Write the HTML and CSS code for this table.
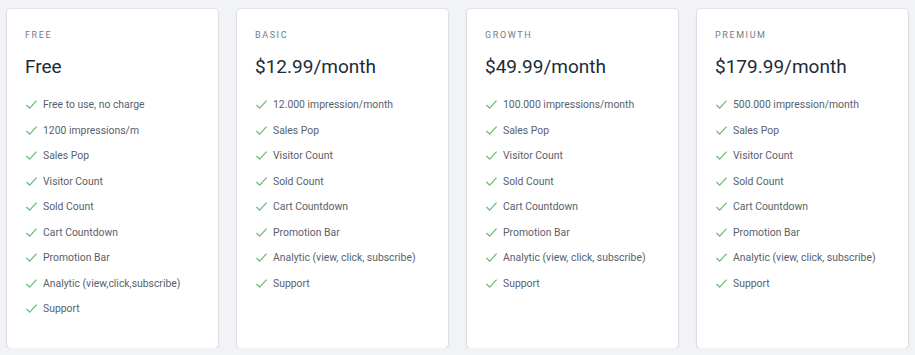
FILE: index.html
```html
<!DOCTYPE html>
<html lang="en">
<head>
<meta charset="utf-8">
<title>Pricing plans</title>
<link rel="stylesheet" href="styles.css">
</head>
<body>
<div class="plans">
  <section class="card">
    <div class="label">FREE</div>
    <h2 class="price">Free</h2>
    <ul class="features">
      <li><svg class="check" viewBox="0 0 14 12"><path d="M1.5 6.5 L5 10 L12.5 1.8"/></svg>Free to use, no charge</li>
      <li><svg class="check" viewBox="0 0 14 12"><path d="M1.5 6.5 L5 10 L12.5 1.8"/></svg>1200 impressions/m</li>
      <li><svg class="check" viewBox="0 0 14 12"><path d="M1.5 6.5 L5 10 L12.5 1.8"/></svg>Sales Pop</li>
      <li><svg class="check" viewBox="0 0 14 12"><path d="M1.5 6.5 L5 10 L12.5 1.8"/></svg>Visitor Count</li>
      <li><svg class="check" viewBox="0 0 14 12"><path d="M1.5 6.5 L5 10 L12.5 1.8"/></svg>Sold Count</li>
      <li><svg class="check" viewBox="0 0 14 12"><path d="M1.5 6.5 L5 10 L12.5 1.8"/></svg>Cart Countdown</li>
      <li><svg class="check" viewBox="0 0 14 12"><path d="M1.5 6.5 L5 10 L12.5 1.8"/></svg>Promotion Bar</li>
      <li><svg class="check" viewBox="0 0 14 12"><path d="M1.5 6.5 L5 10 L12.5 1.8"/></svg>Analytic (view,click,subscribe)</li>
      <li><svg class="check" viewBox="0 0 14 12"><path d="M1.5 6.5 L5 10 L12.5 1.8"/></svg>Support</li>
    </ul>
  </section>
  <section class="card">
    <div class="label">BASIC</div>
    <h2 class="price">$12.99/month</h2>
    <ul class="features">
      <li><svg class="check" viewBox="0 0 14 12"><path d="M1.5 6.5 L5 10 L12.5 1.8"/></svg>12.000 impression/month</li>
      <li><svg class="check" viewBox="0 0 14 12"><path d="M1.5 6.5 L5 10 L12.5 1.8"/></svg>Sales Pop</li>
      <li><svg class="check" viewBox="0 0 14 12"><path d="M1.5 6.5 L5 10 L12.5 1.8"/></svg>Visitor Count</li>
      <li><svg class="check" viewBox="0 0 14 12"><path d="M1.5 6.5 L5 10 L12.5 1.8"/></svg>Sold Count</li>
      <li><svg class="check" viewBox="0 0 14 12"><path d="M1.5 6.5 L5 10 L12.5 1.8"/></svg>Cart Countdown</li>
      <li><svg class="check" viewBox="0 0 14 12"><path d="M1.5 6.5 L5 10 L12.5 1.8"/></svg>Promotion Bar</li>
      <li><svg class="check" viewBox="0 0 14 12"><path d="M1.5 6.5 L5 10 L12.5 1.8"/></svg>Analytic (view, click, subscribe)</li>
      <li><svg class="check" viewBox="0 0 14 12"><path d="M1.5 6.5 L5 10 L12.5 1.8"/></svg>Support</li>
    </ul>
  </section>
  <section class="card">
    <div class="label">GROWTH</div>
    <h2 class="price">$49.99/month</h2>
    <ul class="features">
      <li><svg class="check" viewBox="0 0 14 12"><path d="M1.5 6.5 L5 10 L12.5 1.8"/></svg>100.000 impressions/month</li>
      <li><svg class="check" viewBox="0 0 14 12"><path d="M1.5 6.5 L5 10 L12.5 1.8"/></svg>Sales Pop</li>
      <li><svg class="check" viewBox="0 0 14 12"><path d="M1.5 6.5 L5 10 L12.5 1.8"/></svg>Visitor Count</li>
      <li><svg class="check" viewBox="0 0 14 12"><path d="M1.5 6.5 L5 10 L12.5 1.8"/></svg>Sold Count</li>
      <li><svg class="check" viewBox="0 0 14 12"><path d="M1.5 6.5 L5 10 L12.5 1.8"/></svg>Cart Countdown</li>
      <li><svg class="check" viewBox="0 0 14 12"><path d="M1.5 6.5 L5 10 L12.5 1.8"/></svg>Promotion Bar</li>
      <li><svg class="check" viewBox="0 0 14 12"><path d="M1.5 6.5 L5 10 L12.5 1.8"/></svg>Analytic (view, click, subscribe)</li>
      <li><svg class="check" viewBox="0 0 14 12"><path d="M1.5 6.5 L5 10 L12.5 1.8"/></svg>Support</li>
    </ul>
  </section>
  <section class="card">
    <div class="label">PREMIUM</div>
    <h2 class="price">$179.99/month</h2>
    <ul class="features">
      <li><svg class="check" viewBox="0 0 14 12"><path d="M1.5 6.5 L5 10 L12.5 1.8"/></svg>500.000 impression/month</li>
      <li><svg class="check" viewBox="0 0 14 12"><path d="M1.5 6.5 L5 10 L12.5 1.8"/></svg>Sales Pop</li>
      <li><svg class="check" viewBox="0 0 14 12"><path d="M1.5 6.5 L5 10 L12.5 1.8"/></svg>Visitor Count</li>
      <li><svg class="check" viewBox="0 0 14 12"><path d="M1.5 6.5 L5 10 L12.5 1.8"/></svg>Sold Count</li>
      <li><svg class="check" viewBox="0 0 14 12"><path d="M1.5 6.5 L5 10 L12.5 1.8"/></svg>Cart Countdown</li>
      <li><svg class="check" viewBox="0 0 14 12"><path d="M1.5 6.5 L5 10 L12.5 1.8"/></svg>Promotion Bar</li>
      <li><svg class="check" viewBox="0 0 14 12"><path d="M1.5 6.5 L5 10 L12.5 1.8"/></svg>Analytic (view, click, subscribe)</li>
      <li><svg class="check" viewBox="0 0 14 12"><path d="M1.5 6.5 L5 10 L12.5 1.8"/></svg>Support</li>
    </ul>
  </section>
</div>
</body>
</html>
```
FILE: styles.css
```css
* { box-sizing: border-box; }
html, body { margin: 0; padding: 0; }
body {
  background: #f2f3f6;
  font-family: Roboto, "Liberation Sans", sans-serif;
  color: #454f5b;
}
.plans {
  display: grid;
  grid-template-columns: repeat(4, 211px);
  column-gap: 19px;
  padding: 9px 8px 0 7px;
}
.card {
  background: #fff;
  height: 339px;
  border-radius: 4px;
  box-shadow: 0 0 0 1px rgba(63, 63, 68, 0.06), 0 1px 3px 0 rgba(63, 63, 68, 0.15);
  padding: 21px 18px 0 18px;
}
.label {
  font-size: 9px;
  letter-spacing: 1.6px;
  color: #727b85;
  line-height: 11px;
}
.price {
  margin: 14px 0 0 0;
  font-size: 19px;
  font-weight: 400;
  color: #212b36;
  line-height: 24px;
}
.features {
  list-style: none;
  margin: 13px 0 0 0;
  padding: 0;
}
.features li {
  display: flex;
  align-items: center;
  height: 25.5px;
  font-size: 10.4px;
  color: #58616b;
}
.check {
  width: 13px;
  height: 11px;
  margin-right: 5px;
  flex: none;
}
.check path {
  fill: none;
  stroke: #6dbb76;
  stroke-width: 1.4;
}
```
